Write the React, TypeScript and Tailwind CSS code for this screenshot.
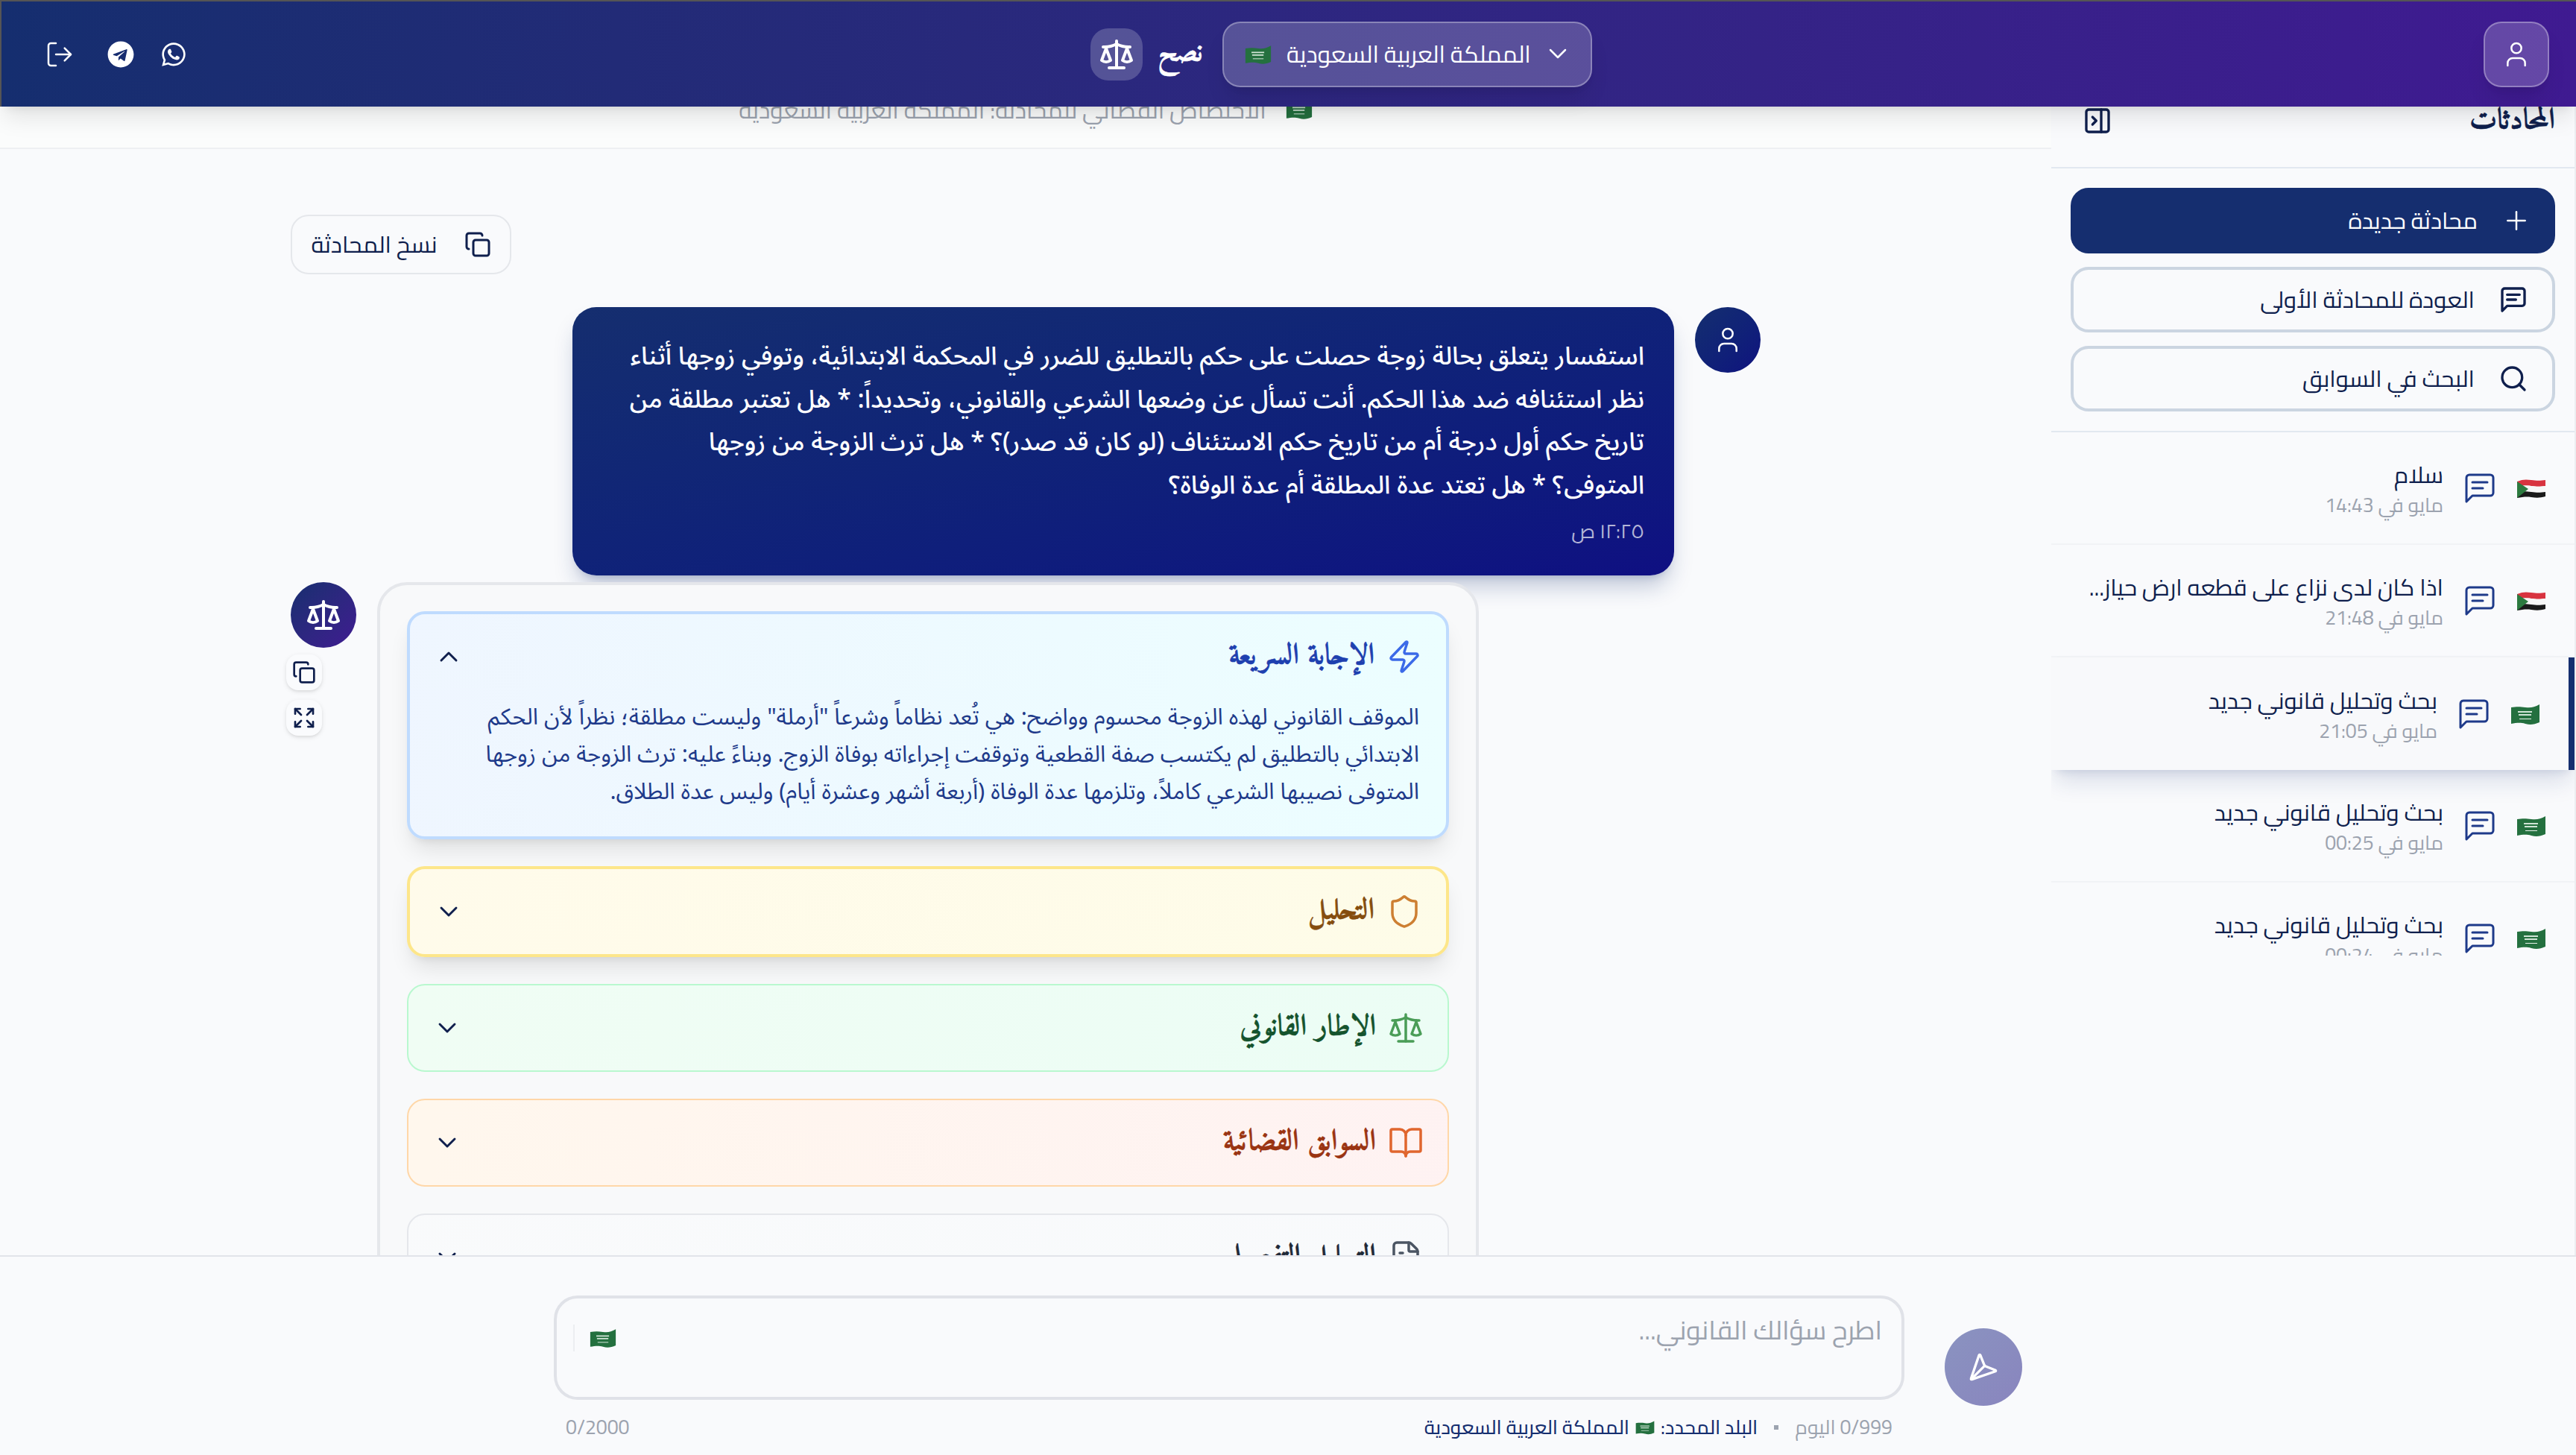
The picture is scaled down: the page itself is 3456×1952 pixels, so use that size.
import React from "react";
import { ChevronDown, ChevronUp, Copy, Expand, LogOut, User, Plus, Search, Zap, Shield, Scale, BookOpen, FileText, Send, PanelRightClose } from "lucide-react";
import { FaTelegram, FaWhatsapp } from "react-icons/fa";

const ui = "font-['Cairo','Noto_Sans',sans-serif]";
const head = "font-['Amiri','Liberation_Serif',serif] [-webkit-text-stroke:0.25px_currentColor]";
const body = "font-['Noto_Sans_Arabic','Noto_Sans',sans-serif]";

function SaudiFlag({ className }: { className: string }) {
  return (
    <svg viewBox="0 0 40 30" className={className} aria-hidden>
      <path d="M1 6c7-1 12-1 19 0s12 0 19-4v24c-7 3-12 4-19 2s-12-1-19 0z" fill="#24703f" />
      <path d="M10 11h19v2H10zM11 15h17v2H11z" fill="#cfe3d5" />
      <path d="M12 21h16v1H12z" fill="#e8f2eb" />
    </svg>
  );
}

function SudanFlag({ className }: { className: string }) {
  return (
    <svg viewBox="0 0 40 30" className={className} aria-hidden>
      <path d="M1 6c7-3 12-3 19-2s12 1 19 0v8c-7 1-12 1-19 0s-12 0-19 2z" fill="#d8333f" />
      <path d="M1 13c7-2 12-2 19-1s12 1 19 0v8c-7 1-12 1-19 0s-12 0-19 1z" fill="#f7f7f7" />
      <path d="M1 20c7-1 12-1 19 0s12 1 19 0v6c-7 2-12 2-19 1s-12 0-19 1z" fill="#1a1a1a" />
      <path d="M1 6l15 10L1 28z" fill="#2c7a3f" />
    </svg>
  );
}

function ChatIcon({ className, sw = 2 }: { className: string; sw?: number }) {
  return (
    <svg viewBox="0 0 24 24" fill="none" stroke="currentColor" strokeWidth={sw} strokeLinecap="round" strokeLinejoin="round" className={className}>
      <path d="M21 15a2 2 0 0 1-2 2H7l-4 4V5a2 2 0 0 1 2-2h14a2 2 0 0 1 2 2z" />
      <path d="M7 8h10M7 12h7" />
    </svg>
  );
}

const chats = [
  { t: "سلام", d: "مايو في 14:43", f: "sd" },
  { t: "اذا كان لدى نزاع على قطعه ارض حياز...", d: "مايو في 21:48", f: "sd" },
  { t: "بحث وتحليل قانوني جديد", d: "مايو في 21:05", f: "sa", active: true },
  { t: "بحث وتحليل قانوني جديد", d: "مايو في 00:25", f: "sa" },
  { t: "بحث وتحليل قانوني جديد", d: "مايو في 00:24", f: "sa" },
];

const sections = [
  { t: "التحليل", Icon: Shield, box: "border-2 border-[#fde68a] bg-gradient-to-r from-amber-50 to-yellow-50 shadow-lg", tc: "text-[#854d0e]", ic: "text-[#cd7f32]" },
  { t: "الإطار القانوني", Icon: Scale, box: "border border-green-200 bg-gradient-to-r from-green-50 to-emerald-50", tc: "text-[#14532d]", ic: "text-[#4a9d57]" },
  { t: "السوابق القضائية", Icon: BookOpen, box: "border border-orange-200 bg-gradient-to-r from-orange-50 to-red-50", tc: "text-[#9a3412]", ic: "text-[#e0662e]" },
  { t: "التحليل التفصيلي", Icon: FileText, box: "border border-gray-200 bg-gradient-to-r from-gray-50 to-slate-50", tc: "text-[#1f2937]", ic: "text-[#4b5563]" },
];

export default function App() {
  return (
    <div dir="rtl" className={`[zoom:2] relative w-[1728px] h-[976px] overflow-hidden bg-[#f9fafc] text-[#0f1f4d] ${ui}`}>
      {/* top bar */}
      <header className="absolute top-0 inset-x-0 z-20 h-[71.5px] border-t border-l border-[#555] bg-gradient-to-r from-[#152e6f] to-[#3f1a91] shadow-lg flex items-center justify-between pr-[18px] pl-[21px]">
        <button className="w-11 h-11 rounded-xl bg-white/20 border border-white/30 shadow-lg flex items-center justify-center text-white">
          <User className="w-5 h-5" strokeWidth={1.5} />
        </button>
        <div className="flex items-center gap-[13px]">
          <div className="w-[248px] h-11 rounded-xl bg-white/20 border border-white/30 shadow-lg flex items-center justify-between pr-3 pl-[14px] text-white text-[15.7px]">
            <span className="flex items-center gap-2">
              <ChevronDown className="w-5 h-5" strokeWidth={1.5} />
              <span>المملكة العربية السعودية</span>
            </span>
            <SaudiFlag className="w-[18px] h-[14px]" />
          </div>
          <div className="flex items-center gap-2.5 text-white">
            <span className={`${head} text-[19.5px] font-bold`}>نصح</span>
            <span className="w-[35px] h-[35px] rounded-xl bg-white/20 flex items-center justify-center">
              <Scale className="w-6 h-6" />
            </span>
          </div>
        </div>
        <div className="flex items-center text-white">
          <span className="w-[34px] flex justify-center"><FaWhatsapp className="w-[18px] h-[18px]" /></span>
          <span className="w-[34px] mr-[1.5px] flex justify-center"><FaTelegram className="w-[18px] h-[18px]" /></span>
          <span className="w-9 mr-1.5 flex justify-center"><LogOut className="w-5 h-5" strokeWidth={1.5} /></span>
        </div>
      </header>

      <div className="flex h-full">
        {/* sidebar */}
        <aside className="w-[352px] shrink-0 h-[842px] border-r border-r-[#eceef1]">
          <div className="h-[641px] overflow-hidden flex flex-col">
            <div className="h-[113px] shrink-0 border-b border-[#e2e8f0] flex items-end justify-between pb-[17px] pr-[13px] pl-[21px]">
              <span className={`${head} text-xl leading-7 font-bold text-[#0f1f4d]`}>المحادثات</span>
              <PanelRightClose className="w-5 h-5 mb-1" />
            </div>
            <div className="h-[177px] shrink-0 border-b border-[#e2e8f0] pr-[13px] pl-[13px] pt-[13px] flex flex-col gap-[9px]">
              <button className="h-11 rounded-xl bg-[#152e6f] text-white px-4 flex items-center gap-4 text-[15.6px]">
                <Plus className="w-5 h-5" strokeWidth={1.5} /><span>محادثة جديدة</span>
              </button>
              <button className="h-11 rounded-xl border-2 border-[#cbd5e1] px-4 flex items-center gap-4 text-[15.6px]">
                <ChatIcon className="w-5 h-5" /><span>العودة للمحادثة الأولى</span>
              </button>
              <button className="h-11 rounded-xl border-2 border-[#cbd5e1] px-4 flex items-center gap-4 text-[15.6px]">
                <Search className="w-5 h-5" /><span>البحث في السوابق</span>
              </button>
            </div>
            <div className="flex-1 overflow-hidden">
              {chats.map((c, i) => (
                <div
                  key={i}
                  className={`h-[75.5px] pr-[19px] pl-4 flex items-center gap-[12.5px] ${
                    c.active ? "border-r-4 border-r-[#152e6f] bg-[#f8f9fb] shadow-lg shadow-[#152e6f]/15 relative" : "border-b border-[#f1f3f6]"
                  }`}
                >
                  {c.f === "sd" ? <SudanFlag className="w-5 h-[15px] shrink-0" /> : <SaudiFlag className="w-5 h-[15px] shrink-0" />}
                  <ChatIcon className="w-6 h-6 text-[#1e3a8a] shrink-0" sw={1.5} />
                  <div className="min-w-0">
                    <div className="text-[15.6px] leading-5 whitespace-nowrap">{c.t}</div>
                    <div className="text-[13.3px] leading-4 mt-0.5 text-[#9ca3af]">{c.d}</div>
                  </div>
                </div>
              ))}
            </div>
          </div>
        </aside>

        {/* main */}
        <main className="flex-1 min-w-0 h-[842px] flex flex-col overflow-hidden">
          <div className="h-[100px] shrink-0 border-b border-[#eef0f3] bg-[#fbfcfc] flex items-end justify-center pb-[13.5px]">
            <div className="flex items-center gap-[13px] text-[15.8px] text-[#9ca3af]">
              <SaudiFlag className="w-[18px] h-[14px]" />
              <span>الاختصاص القضائي للمحادثة: المملكة العربية السعودية</span>
            </div>
          </div>
          <div className="w-[986px] mx-auto pt-11">
            <button className="mr-auto block w-[148px] h-10 rounded-xl border border-[#e5e7eb]">
              <span className="flex items-center justify-center gap-[18px] text-[15.6px]">
                <Copy className="w-[18px] h-[18px]" /><span>نسخ المحادثة</span>
              </span>
            </button>
            <div className="mt-[22px] flex items-start gap-3.5">
              <span className="w-11 h-11 rounded-full bg-gradient-to-br from-[#152e6f] to-[#10107f] flex items-center justify-center text-white shrink-0">
                <User className="w-5 h-5" strokeWidth={1.5} />
              </span>
              <div className={`w-[739px] h-[180px] rounded-2xl bg-gradient-to-br from-[#152e6f] to-[#0f0f82] shadow-lg shadow-[#152e6f]/25 text-white px-5 pt-[19px] ${body}`}>
                <p className="text-[16.85px] leading-[28.8px] font-medium whitespace-nowrap">
                  استفسار يتعلق بحالة زوجة حصلت على حكم بالتطليق للضرر في المحكمة الابتدائية، وتوفي زوجها أثناء<br />
                  نظر استئنافه ضد هذا الحكم. أنت تسأل عن وضعها الشرعي والقانوني، وتحديداً: * هل تعتبر مطلقة من<br />
                  تاريخ حكم أول درجة أم من تاريخ حكم الاستئناف (لو كان قد صدر)؟ * هل ترث الزوجة من زوجها<br />
                  المتوفى؟ * هل تعتد عدة المطلقة أم عدة الوفاة؟
                </p>
                <div className={`text-[13.3px] leading-4 text-white/70 mt-2 ${ui}`}>١٢:٢٥ ص</div>
              </div>
            </div>
            <div className="mt-[4.5px] flex flex-row-reverse items-start gap-3.5">
              <div className="w-11 shrink-0 flex flex-col">
                <span className="w-11 h-11 rounded-full bg-gradient-to-br from-[#152e6f] to-[#3f1a91] flex items-center justify-center text-white">
                  <Scale className="w-6 h-6" />
                </span>
                <span className="mt-[4.5px] self-end -ml-[3px] w-6 h-6 rounded-lg bg-[#fafbfd] shadow flex items-center justify-center"><Copy className="w-4 h-4" /></span>
                <span className="mt-[6.5px] self-end -ml-[3px] w-6 h-6 rounded-lg bg-[#fafbfd] shadow flex items-center justify-center"><Expand className="w-4 h-4" /></span>
              </div>
              <div className="w-[739px] rounded-[20px] border-2 border-[#e5e7eb] bg-[#f8f9fa] px-[18px] pt-[17.5px] pb-[18px] flex flex-col gap-[18px]">
                <section className="rounded-xl border-2 border-[#bfdbfe] bg-gradient-to-r from-blue-50 to-cyan-50 shadow-lg">
                  <div className="h-[57px] px-4 flex items-center justify-between">
                    <span className="flex items-center gap-2">
                      <Zap className="w-6 h-6 text-[#3b6ae8]" strokeWidth={1.75} />
                      <span className={`${head} text-[19.8px] font-bold text-[#1e40af]`}>الإجابة السريعة</span>
                    </span>
                    <ChevronUp className="w-5 h-5" strokeWidth={1.75} />
                  </div>
                  <p className={`px-[18px] pb-[17px] text-[15.3px] leading-[25px] text-[#1e3a8a] whitespace-nowrap ${body}`}>
                    الموقف القانوني لهذه الزوجة محسوم وواضح: هي تُعد نظاماً وشرعاً "أرملة" وليست مطلقة؛ نظراً لأن الحكم<br />
                    الابتدائي بالتطليق لم يكتسب صفة القطعية وتوقفت إجراءاته بوفاة الزوج. وبناءً عليه: ترث الزوجة من زوجها<br />
                    المتوفى نصيبها الشرعي كاملاً، وتلزمها عدة الوفاة (أربعة أشهر وعشرة أيام) وليس عدة الطلاق.
                  </p>
                </section>
                {sections.map((s) => (
                  <section key={s.t} className={`rounded-xl ${s.box}`}>
                    <div className="h-[57px] px-4 flex items-center justify-between">
                      <span className="flex items-center gap-2">
                        <s.Icon className={`w-6 h-6 ${s.ic}`} strokeWidth={1.75} />
                        <span className={`${head} text-[19.8px] font-bold ${s.tc}`}>{s.t}</span>
                      </span>
                      <ChevronDown className="w-5 h-5" strokeWidth={1.75} />
                    </div>
                  </section>
                ))}
              </div>
            </div>
          </div>
        </main>
      </div>

      {/* composer */}
      <footer className="absolute bottom-0 inset-x-0 z-10 h-[134px] border-t border-[#e2e4ea] bg-[#f9fafc] flex justify-center pt-[26px]">
        <div className="w-[985px] flex items-start gap-[27px]">
          <button className="mt-[22px] w-[52px] h-[52px] shrink-0 rounded-full bg-gradient-to-br from-[#8a93c0] to-[#8985be] flex items-center justify-center text-white">
            <Send className="w-5 h-5 rotate-180" />
          </button>
          <div className="flex-1 min-w-0">
            <div className="h-[70px] rounded-2xl border-2 border-[#e0e2e8] flex items-start justify-between pr-[13px] pl-[11px] pt-[9px] text-[17.7px] leading-6 text-[#9ca3af]">
              <span>اطرح سؤالك القانوني...</span>
              <span className="mt-[8.5px] border-l border-[#eceef1] pl-[10px] h-[18px] flex items-center"><SaudiFlag className="w-[18px] h-[14px]" /></span>
            </div>
            <div className="mt-[8.5px] px-2 flex items-center justify-between text-[13.3px] text-[#9ca3af]">
              <span className="flex items-center gap-[11px]">
                <span>0/999 اليوم</span>
                <span className="w-[3px] h-[3px] bg-[#9ca3af]" />
                <span className="flex items-center gap-1 text-[13px] text-[#152e6f] font-medium">البلد المحدد: <SaudiFlag className="w-[13px] h-[10px]" /> المملكة العربية السعودية</span>
              </span>
              <span>0/2000</span>
            </div>
          </div>
        </div>
      </footer>
    </div>
  );
}
